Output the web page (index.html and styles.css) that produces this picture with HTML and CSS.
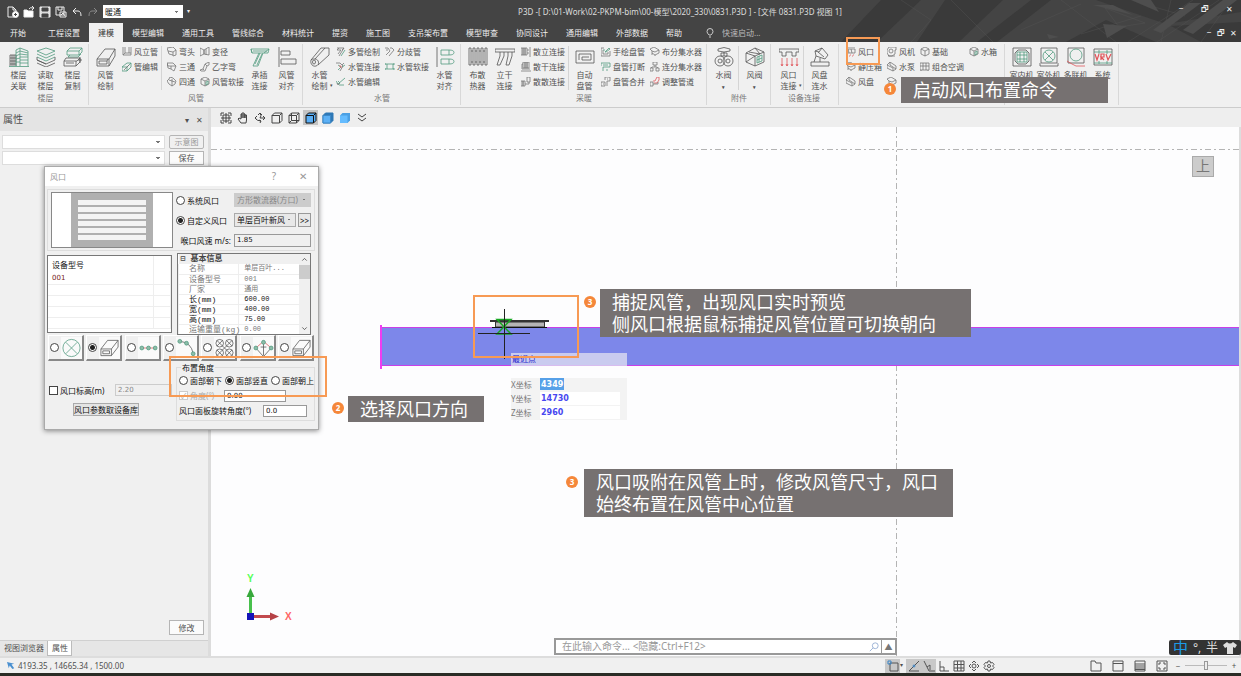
FILE: index.html
```html
<!DOCTYPE html>
<html lang="zh-CN">
<head>
  <meta charset="UTF-8" />
  <meta name="viewport" content="width=device-width, initial-scale=1.0" />
  <title>P3D</title>
  <link rel="stylesheet" href="styles.css">
</head>
<body>
<!-- icon sprite -->
<svg class="sprite" aria-hidden="true">
  <!-- large ribbon icons -->
  <symbol id="b-floors" viewBox="0 0 20 20"><path d="M1 19V8h6v11M3 8v11M5 8v11M1 11h6M1 14h6M1 17h6"/><path class="g" d="M7 19V3l4-2v18M11 1l8 3v15M11 4l8 2M11 7l8 1M11 10h8M11 13h8M11 16h8M7 6l4-2M7 9l4-2M7 12l4-1M7 15h4M0 19.500h20"/></symbol>
  <symbol id="b-read" viewBox="0 0 20 20"><path class="g" d="M1 4l9-3 9 3-9 4zM1 7l9 4 9-4M1 10l9 4 9-4"/><path d="M1 13l9 4 9-4M1 16l9 4 9-4M1 10v3l9 4M19 10v3"/></symbol>
  <symbol id="b-copy" viewBox="0 0 20 20"><path class="g" d="M4 4l3-3h12l-3 3zM4 4v4h12V4M19 1v4l-3 3M7 8l-2 2h10l3-3"/><path d="M1 14l2-3h14l-3 3zM1 14v5h12v-5M17 11v4l-4 4M15 13h4M17 10v6M3 16h8"/></symbol>
  <symbol id="b-duct" viewBox="0 0 20 20"><path d="M1 12h12v7H1zM1 12L9 2h10l-6 10M19 2v7l-6 10M3 14h8v3H3zM11 14l1-2"/></symbol>
  <symbol id="b-socket" viewBox="0 0 20 20"><path class="g" d="M1 2h18l-1 4h-5L8 19H3L9 6H2zM1 2l1 4M19 2l-5 4M9 6h4M5 17l5-11M7 18l5-11M3 4h14"/></symbol>
  <symbol id="b-align" viewBox="0 0 20 20"><path d="M2 0v20M4 4h9v4H4zM4 12h15v5H4z"/></symbol>
  <symbol id="b-pipe" viewBox="0 0 20 20"><path d="M1 13L11 1h8v7L8 18M1 13c-1 4 2 7 5 6 4-1 3-7-1-7-2 0-3 0-4 1zM5 12L15 1"/><ellipse cx="4" cy="15" rx="1.500" ry="2"/></symbol>
  <symbol id="b-palign" viewBox="0 0 20 20"><path d="M2 0v20"/><path class="g" d="M6 3h8v5H6zM6 12h8v5H6zM14 3q5 0 5 2.500T14 8M14 12q5 0 5 2.500T14 17"/></symbol>
  <symbol id="b-radiator" viewBox="0 0 20 20"><path d="M1 1h2v17H1zM5 1h2v17H5zM9 1h2v17H9zM13 1h2v17h-2zM17 1h2v17h-2zM3 4h2M7 4h2M11 4h2M15 4h2M3 15h2M7 15h2M11 15h2M15 15h2"/></symbol>
  <symbol id="b-riser" viewBox="0 0 20 20"><path d="M0 2h20v3H0zM5 5v4L2 18h3l4-9V5M13 5v4l-2 9h3l3-9V5"/></symbol>
  <symbol id="b-coil" viewBox="0 0 20 20"><path d="M1 4h18v12H1zM4 13V7h12v6H7v-3h7"/></symbol>
  <symbol id="b-wvalve" viewBox="0 0 20 20"><path d="M4 2q6-3 12 0v2q-6 2-12 0zM10 5v4M7 6h6v3H7z"/><circle cx="6" cy="14" r="5"/><circle cx="14" cy="14" r="5"/><circle cx="6" cy="14" r="2"/><circle cx="14" cy="14" r="2"/></symbol>
  <symbol id="b-avalve" viewBox="0 0 20 20"><path d="M1 6l9-5 9 4-9 4zM1 6v9l9 4V9M10 19l9-4V5M1 15l9-6M4 5l11 2M10 1l5 6"/><path class="g" d="M12 10l5-2v6l-5 2zM12 13l5-2M14 9v6"/></symbol>
  <symbol id="b-vent" viewBox="0 0 20 20"><path d="M0 2h20v3h-3v4h-4V5H7v4H3V5H0z"/><path class="r" d="M3 11v8M8 11v8M13 11v8M18 11v8M2 17l1 2 1-2M7 17l1 2 1-2M12 17l1 2 1-2M17 17l1 2 1-2"/></symbol>
  <symbol id="b-fcu" viewBox="0 0 20 20"><path d="M1 15h18v4H1zM4 15l2-6M6 9l-1-5 7-3 6 7-3 4-9-3zM8 5l6 5M5 4l4 1M12 1l-3 4M10 11v4"/></symbol>
  <symbol id="b-indoor" viewBox="0 0 20 20"><path d="M1 1h18v18H1zM6 3h8l3 3v8l-3 3H6l-3-3V6z"/><path class="g" d="M5 5h10v10H5zM8 5v10M12 5v10M5 8h10M5 12h10"/></symbol>
  <symbol id="b-outdoor" viewBox="0 0 20 20"><path d="M2 1h16v15H2zM1 16v3h18v-3"/><circle class="g" cx="10" cy="9" r="6"/><path class="g" d="M6 5l8 8M14 5l-8 8"/></symbol>
  <symbol id="b-multi" viewBox="0 0 20 20"><path d="M2 1h16v15H2z"/><circle class="g" cx="10" cy="8" r="6"/><path class="r" d="M1 14l5 3 4 2h9"/></symbol>
  <symbol id="b-vrv" viewBox="0 0 20 20"><path d="M1 2h18v16H1z"/><path class="g" d="M1 5h18M1 16h18M6 3v4M14 3v4M6 14v3M14 14v3"/><path class="r" d="M2 7l2 6 2-6M8 13V7h3v3H8l3 3M13 7l2 6 3-6" stroke-width="1.200"/></symbol>
  <!-- small ribbon icons -->
  <symbol id="s-up" viewBox="0 0 10 10"><path d="M1 0v8h8V0M3 0v6M7 0v6M1 8l2-2h6"/></symbol>
  <symbol id="s-edit" viewBox="0 0 10 10"><path class="g" d="M0 5l5-4h4v4L5 9H0zM0 5h5v4M5 5l4-4"/><path d="M2 8l5-5"/></symbol>
  <symbol id="s-elbow" viewBox="0 0 10 10"><path d="M0 1l6-1 3 3v5L6 9V5L1 4zM1 4l1 3 4 1M6 5l3-2"/></symbol>
  <symbol id="s-tee" viewBox="0 0 10 10"><path d="M0 1h6l3 3-2 5-3-2V4L1 4zM4 4l5 0M0 1l1 5 3 1"/></symbol>
  <symbol id="s-cross" viewBox="0 0 10 10"><path d="M3 0l3 1 3 3-1 3-3 2-3-2-2-3 2-2zM2 3l6 2M5 2v7"/></symbol>
  <symbol id="s-cube" viewBox="0 0 10 10"><path d="M5 0l4 2v5L5 9 1 7V2zM1 2l4 2 4-2M5 4v5"/></symbol>
  <symbol id="s-cubeg" viewBox="0 0 10 10"><path d="M5 0l4 2v5L5 9 1 7V2zM1 2l4 2 4-2M5 4v5"/><path class="g" d="M6 5l2-1v3L6 8z"/></symbol>
  <symbol id="s-reduce" viewBox="0 0 10 10"><path d="M0 1l4 2v4L0 9zM4 3l5-3v8L4 7M4 3v4M6 2v6"/></symbol>
  <symbol id="s-bend" viewBox="0 0 10 10"><path d="M0 8l3-1 2-5 4-2v3L7 4 5 9H1zM3 7l1 1M5 2l2 2"/></symbol>
  <symbol id="s-multi" viewBox="0 0 10 10"><path d="M1 1h7L3 9M1 3h4L2 7M3 1L1 3M6 3l2-2"/><path class="g" d="M5 9l4-6"/></symbol>
  <symbol id="s-conn" viewBox="0 0 10 10"><path d="M0 1h4l3 3-3 5M8 1L6 3"/><path class="g" d="M2 3l3 2-3 3M9 3L6 5"/><path class="r" d="M3 4h2v2"/></symbol>
  <symbol id="s-pedit" viewBox="0 0 10 10"><path class="g" d="M0 4l2 3 7-6M3 8h5M2 4l2 2"/><path d="M1 6l1 2 2-2"/></symbol>
  <symbol id="s-fork" viewBox="0 0 10 10"><path d="M0 1h3l2 3-4 4M5 1h2l2 2-5 6M1 3h2"/></symbol>
  <symbol id="s-soft" viewBox="0 0 10 10"><path class="g" d="M2 2h6v5H2zM0 1v2M0 6v2M9 1v2M9 6v2M0 2h2M0 7h2M8 2h1M8 7h1"/></symbol>
  <symbol id="s-bars" viewBox="0 0 10 10"><path d="M0 1h2v7H0zM2 1h2v7H2zM4 1h2v7H4zM6 3h2M6 6h2M9 0v10"/></symbol>
  <symbol id="s-bars2" viewBox="0 0 10 10"><path d="M2 0h2v6H2zM4 0h2v6H4zM6 0h2v6H6zM0 9h10M1 7h8M2 2H1v5"/></symbol>
  <symbol id="s-bars3" viewBox="0 0 10 10"><path d="M0 4h2v5H0zM2 4h2v5H2zM6 0h3v5H6zM4 7h4V5"/></symbol>
  <symbol id="s-hand" viewBox="0 0 10 10"><path d="M0 1h3M0 1v8h9V4M2 3v4h5V5"/><path class="g" d="M4 5l4-4 1 1-4 3zM4 3H2"/></symbol>
  <symbol id="s-break" viewBox="0 0 10 10"><path class="g" d="M0 1h9v4H2v4M2 3h5M0 1v3M6 7v2"/></symbol>
  <symbol id="s-merge" viewBox="0 0 10 10"><path d="M4 0h5v4H6v5M0 5h4v4H0zM6 2h1M2 7h1M4 0v3"/></symbol>
  <symbol id="s-dist" viewBox="0 0 10 10"><path d="M0 2l4-2 5 3v3L5 8 2 6V4zM2 4l3 1 4-2M5 8v1M2 6v2"/></symbol>
  <symbol id="s-dist2" viewBox="0 0 10 10"><path d="M3 0h4v3H3zM0 6h3v3H0zM6 6h3v3H6zM5 3v2M1 6l1-1h5l1 1"/></symbol>
  <symbol id="s-adjust" viewBox="0 0 10 10"><path class="r" d="M3 4h2l2-4h2v3L7 6H4"/><path d="M0 5h3v4H0zM3 7h5V5"/></symbol>
  <symbol id="s-outlet" viewBox="0 0 10 10"><path d="M0 0h9M0 2h9v4H0zM2 2l1 4M5 2l1 4"/><path class="r" d="M1 8h1M4 8h1M7 8h1M0 9h1M3 9h1M6 9h1"/></symbol>
  <symbol id="s-fan" viewBox="0 0 10 10"><path d="M2 0h7v3H8v4L5 9H2L0 6V3zM2 8l-1 1h7"/><circle cx="4" cy="4" r="2"/></symbol>
  <symbol id="s-pump" viewBox="0 0 10 10"><path d="M0 3l3-3 6 4v3L6 9 0 6zM3 0v3l6 4M0 3l6 3v3"/></symbol>
  <symbol id="s-ahu" viewBox="0 0 10 10"><path d="M0 1h9v7H0zM3 1v7M6 1v7M0 4h9M1 8v1M8 8v1"/></symbol>
  <!-- cubes of the view bar -->
  <symbol id="v-cube" viewBox="0 0 12 12"><path d="M1 3.500h7.500V11H1zM1 3.500L3.500 1H11L8.500 3.500M11 1v7.500L8.500 11"/></symbol>
</svg>

<div class="app">
  <header class="top">
    <svg class="top-art" viewBox="0 0 400 42" preserveAspectRatio="xMaxYMid slice" aria-hidden="true">
      <path class="art-dark" d="M40 0L0 42h36L80 0zM104 0L76 42h42l44-42zM190 0l-54 42h20L210 0zM255 0l70 24 75-12V0zM225 42l40-22 50 22zM330 26l30 16h40V22z"/>
      <path class="art-line" d="M110 0l42 42M60 0l30 20-20 22M220 0l55 42M352 0l-65 42M378 0l-62 42M264 8l40 15-26 4zM300 3l44 13M330 0l-10 42M390 0l-30 42M240 34l60-18M180 30l60-26"/>
      <path class="art-fill" d="M252 5l20 0 20 10zM290 0l20 0 8 12zM348 3l12 0-40 30-8-3zM382 0l14 0-44 34-10-4zM262 24l24 2-20 12zM206 34l12 3-10 2z"/>
    </svg>
    <div class="titlebar">
      <div class="quick">
        <button aria-label="新建"><svg viewBox="0 0 12 12"><path d="M7 11H1V1h5l3 3v2M6 1v3h3"/><circle cx="8.500" cy="8.500" r="3" fill="#fff"/><path d="M8.500 7v3M7 8.500h3" stroke="#444"/></svg></button>
        <button aria-label="打开"><svg viewBox="0 0 12 12"><path d="M1 11V4h3l1 1h5v6z" fill="#fff"/><path d="M6 3q1-2 4-1M9 0l2 2-2 2"/></svg></button>
        <button aria-label="保存文件"><svg viewBox="0 0 12 12"><path d="M1 1h10v10H1z" fill="#ddd"/><path d="M3 2h6v3H3zM3 8h6v3H3z" fill="#444" stroke="#444"/></svg></button>
        <button aria-label="另存为"><svg viewBox="0 0 12 12"><path d="M1 1h8v8H1zM3 1v3h4V1M5 6h6v5H5z"/><path d="M6 9l2-2 2 3" /></svg></button>
        <button aria-label="撤销"><svg viewBox="0 0 12 12"><path d="M5 2L2 5l3 3M2 5h5q3 0 3 5"/></svg></button>
        <button class="dim" aria-label="重做"><svg viewBox="0 0 12 12"><path d="M7 2l3 3-3 3M10 5H5q-3 0-3 5"/></svg></button>
        <select aria-label="专业"><option>暖通</option></select>
        <span class="caret">▾</span>
      </div>
      <div class="doc-title">P3D -[ D:\01-Work\02-PKPM-bim\00-模型\2020_330\0831.P3D ] - [文件 0831.P3D 视图 1]</div>
      <div class="win"><button aria-label="最小化">‒</button><button aria-label="还原">🗗</button><button aria-label="关闭">✕</button></div>
    </div>
    <nav class="tabs">
      <a href="#">开始</a><a href="#">工程设置</a><a href="#" class="active">建模</a><a href="#">模型编辑</a><a href="#">通用工具</a><a href="#">管线综合</a><a href="#">材料统计</a><a href="#">提资</a><a href="#">施工图</a><a href="#">支吊架布置</a><a href="#">模型审查</a><a href="#">协同设计</a><a href="#">通用编辑</a><a href="#">外部数据</a><a href="#">帮助</a>
      <label class="launch"><svg viewBox="0 0 8 10"><path d="M3 7Q1 5 1 3.500a3 3 0 0 1 6 0Q7 5 5 7zM3 9h2"/></svg><input type="text" aria-label="快速启动" placeholder="快速启动..."></label>
      <div class="win small"><button aria-label="最小化视图">‒</button><button aria-label="还原视图">🗗</button><button aria-label="关闭视图">✕</button></div>
    </nav>
  </header>

  <section class="ribbon">
    <div class="group">
      <div class="items">
        <button class="big"><svg><use href="#b-floors"/></svg>楼层<br>关联</button>
        <button class="big"><svg><use href="#b-read"/></svg>读取<br>楼层</button>
        <button class="big"><svg><use href="#b-copy"/></svg>楼层<br>复制</button>
      </div>
      <div class="name">楼层</div>
    </div>
    <div class="group">
      <div class="items">
        <button class="big"><svg><use href="#b-duct"/></svg>风管<br>绘制</button>
        <div class="stack"><button><svg><use href="#s-up"/></svg>风立管</button><button><svg><use href="#s-edit"/></svg>管编辑</button></div>
        <i class="rule"></i>
        <div class="stack"><button><svg><use href="#s-elbow"/></svg>弯头</button><button><svg><use href="#s-tee"/></svg>三通</button><button><svg><use href="#s-cross"/></svg>四通</button></div>
        <div class="stack"><button><svg><use href="#s-reduce"/></svg>变径</button><button><svg><use href="#s-bend"/></svg>乙字弯</button><button><svg><use href="#s-cubeg"/></svg>风管软接</button></div>
        <button class="big"><svg><use href="#b-socket"/></svg>承插<br>连接</button>
        <button class="big"><svg><use href="#b-align"/></svg>风管<br>对齐</button>
      </div>
      <div class="name">风管</div>
    </div>
    <div class="group">
      <div class="items">
        <button class="big"><svg><use href="#b-pipe"/></svg>水管<br>绘制<em>▾</em></button>
        <div class="stack"><button><svg><use href="#s-multi"/></svg>多管绘制</button><button><svg><use href="#s-conn"/></svg>水管连接</button><button><svg><use href="#s-pedit"/></svg>水管编辑</button></div>
        <div class="stack"><button><svg><use href="#s-fork"/></svg>分歧管</button><button><svg><use href="#s-soft"/></svg>水管软接</button></div>
        <button class="big"><svg><use href="#b-palign"/></svg>水管<br>对齐</button>
      </div>
      <div class="name">水管</div>
    </div>
    <div class="group">
      <div class="items">
        <button class="big"><svg><use href="#b-radiator"/></svg>布散<br>热器</button>
        <button class="big"><svg><use href="#b-riser"/></svg>立干<br>连接</button>
        <div class="stack"><button><svg><use href="#s-bars"/></svg>散立连接</button><button><svg><use href="#s-bars2"/></svg>散干连接</button><button><svg><use href="#s-bars3"/></svg>散散连接</button></div>
        <i class="rule"></i>
        <button class="big"><svg><use href="#b-coil"/></svg>自动<br>盘管</button>
        <div class="stack"><button><svg><use href="#s-hand"/></svg>手绘盘管</button><button><svg><use href="#s-break"/></svg>盘管打断</button><button><svg><use href="#s-merge"/></svg>盘管合并</button></div>
        <div class="stack"><button><svg><use href="#s-dist"/></svg>布分集水器</button><button><svg><use href="#s-dist2"/></svg>连分集水器</button><button><svg><use href="#s-adjust"/></svg>调整管道</button></div>
      </div>
      <div class="name">采暖</div>
    </div>
    <div class="group">
      <div class="items">
        <button class="big"><svg><use href="#b-wvalve"/></svg>水阀<br><b>▾</b></button>
        <i class="rule"></i>
        <button class="big"><svg><use href="#b-avalve"/></svg>风阀<br><b>▾</b></button>
      </div>
      <div class="name">附件</div>
    </div>
    <div class="group roomy">
      <div class="items">
        <button class="big"><svg><use href="#b-vent"/></svg>风口<br>连接<em>▾</em></button>
        <i class="rule"></i>
        <button class="big"><svg><use href="#b-fcu"/></svg>风盘<br>连水</button>
      </div>
      <div class="name">设备连接</div>
    </div>
    <div class="group roomy">
      <div class="items">
        <div class="stack"><button><svg><use href="#s-outlet"/></svg>风口</button><button><svg><use href="#s-dist"/></svg>静压箱</button><button><svg><use href="#s-pump"/></svg>风盘</button></div>
        <div class="stack"><button><svg><use href="#s-fan"/></svg>风机</button><button><svg><use href="#s-pump"/></svg>水泵</button><button aria-label="设备"><svg><use href="#s-dist"/></svg></button></div>
        <div class="stack"><button><svg><use href="#s-cube"/></svg>基础</button><button><svg><use href="#s-ahu"/></svg>组合空调</button></div>
        <div class="stack"><button><svg><use href="#s-cubeg"/></svg>水箱</button></div>
      </div>
    </div>
    <div class="group">
      <div class="items">
        <button class="big"><svg><use href="#b-indoor"/></svg>室内机</button>
        <button class="big"><svg><use href="#b-outdoor"/></svg>室外机</button>
        <button class="big"><svg><use href="#b-multi"/></svg>多联机</button>
        <button class="big"><svg><use href="#b-vrv"/></svg>系统</button>
      </div>
    </div>
  </section>

  <main class="work">
    <aside class="panel">
      <div class="panel-head"><h2>属性</h2><button aria-label="面板菜单">▾</button><button aria-label="关闭面板">✕</button></div>
      <div class="panel-body">
        <div class="prop-row"><select aria-label="图元"><option></option></select><button class="sketch" disabled>示意图</button></div>
        <div class="prop-row"><select aria-label="方案"><option></option></select><button>保存</button></div>
        <button class="modify">修改</button>
      </div>
      <div class="panel-tabs"><a href="#">视图浏览器</a><a href="#" class="active">属性</a></div>
    </aside>

    <section class="view">
      <div class="viewbar">
        <button aria-label="全图"><svg viewBox="0 0 12 12"><path d="M1 4V1h3M8 1h3v3M11 8v3H8M4 11H1V8M1 6h10M6 1v10M3 3h6v6H3z"/></svg></button>
        <button aria-label="平移"><svg viewBox="0 0 12 12"><path d="M4 11L1 7l1-1 2 1V2h1v4-5h2v5-4h1v4-3h1.500v5L9 11z"/></svg></button>
        <button aria-label="旋转"><svg viewBox="0 0 12 12"><path d="M4 3l2-2 2 2M6 1q2 3 0 5M9 4l2 2-2 2M11 6H6M3 4L1 6l2 2M1 6q2 3 6 3M5 8l2 1-1 2"/></svg></button>
        <button aria-label="线框"><svg><use href="#v-cube"/></svg></button>
        <button aria-label="隐藏线"><svg viewBox="0 0 12 12"><path d="M1 3.500h7.500V11H1zM1 3.500L3.500 1H11L8.500 3.500M11 1v7.500L8.500 11M3.500 1v7.500H11M3.500 8.500L1 11"/></svg></button>
        <button class="on" aria-label="着色"><svg viewBox="0 0 12 12"><path d="M1 3.500L3.500 1H11v7.500L8.500 11H1z" fill="#5aaef5" stroke="#111"/><path d="M1 3.500h7.500V11M8.500 3.500L11 1" stroke="#111"/></svg></button>
        <button aria-label="真实"><svg viewBox="0 0 12 12"><path d="M1 3.500L3.500 1H11v7.500L8.500 11H1z" fill="#2f78b6" stroke="#2f78b6"/><path d="M1 3.500h7.500V11H1z" fill="#5cb0f5" stroke="#3b88c8"/></svg></button>
        <button aria-label="光影"><svg viewBox="0 0 12 12"><path d="M1 3.500L3.500 1H11v7.500L8.500 11H1z" fill="#4ba0e4" stroke="none"/><path d="M1 3.500h7.500V11H1z" fill="#65bcff" stroke="none"/></svg></button>
        <button aria-label="更多"><svg viewBox="0 0 12 12"><path d="M2 2l4 3 4-3M2 6l4 3 4-3"/></svg></button>
      </div>
      <div class="canvas">
        <svg class="drawing" aria-hidden="true">
          <path class="axis" d="M0 22.500H2400M685.500 0V1400"/>
          <rect x="170" y="200" width="100%" height="39" fill="#7d87ea"/>
          <path d="M170 200.500H2400M170 238.500H2400" stroke="#c93fe8"/>
          <path d="M170 198v44" stroke="#f03cf0" stroke-width="2"/>
          <rect x="284.500" y="195" width="49" height="5" fill="#b5b5b5" stroke="#333"/>
          <path d="M279 194h59" stroke="#333" stroke-width="2"/>
          <path d="M281 200.500h55" stroke="#111"/>
          <path d="M286 192.500h14l-14 14.500h14z" fill="none" stroke="#17a821" stroke-width="1.500"/>
          <path d="M293.500 182v50M267 206.500h52" stroke="#222"/>
          <!-- axis gizmo -->
          <path d="M39.500 489v-20" stroke="#48c04c" stroke-width="3"/>
          <path d="M39.500 461l4 9h-8z" fill="#38a83c"/>
          <path d="M40 489.500h22" stroke="#c24a4e" stroke-width="3"/>
          <path d="M68 489.500l-9-4v8z" fill="#b54146"/>
          <rect x="36" y="486" width="7" height="7" fill="#1414b8"/>
          <text x="36" y="455" class="ax-y">Y</text>
          <text x="74" y="493" class="ax-x">X</text>
        </svg>
        <div class="cube-face">上</div>
        <div class="snap">最近点</div>
        <div class="coords">
          <label for="cx">X坐标</label><input id="cx" class="sel" type="text" value="4349">
          <label for="cy">Y坐标</label><input id="cy" type="text" value="14730">
          <label for="cz">Z坐标</label><input id="cz" type="text" value="2960">
        </div>
        <div class="command">
          <input type="text" aria-label="命令" placeholder="在此输入命令... &lt;隐藏:Ctrl+F12&gt;">
          <svg viewBox="0 0 12 12"><circle cx="7.500" cy="4.500" r="3.500"/><path d="M5 7l-4 4"/></svg>
          <button aria-label="展开">▲</button>
        </div>
        <div class="ime"><b>中</b><span>°,</span><span>半</span><svg viewBox="0 0 14 12"><path d="M4 0q3 3 6 0l4 3-2 3-2-1v7H4V5L2 6 0 3z"/></svg></div>
      </div>
    </section>
  </main>

  <footer class="status">
    <svg class="pick" viewBox="0 0 10 10"><path d="M0 1l8 2-3 1 3 4-2 1-3-4-1 3z" fill="#4a90d0" stroke="none"/></svg>
    <span class="pos">4193.35 , 14665.34 , 1500.00</span>
    <div class="snaps">
      <button class="on" aria-label="捕捉"><svg viewBox="0 0 12 12"><path d="M3 3h8v8H3z"/><path d="M1 1h3v3H1z" stroke="#3a86c8"/></svg></button>
      <span class="caret">▾</span>
      <button class="on" aria-label="极轴"><svg viewBox="0 0 12 12"><path d="M1 11L11 1M1 11h10"/><circle cx="6" cy="6" r="1" stroke="#3a86c8"/></svg></button>
      <button class="on" aria-label="追踪"><svg viewBox="0 0 12 12"><path d="M1 1l5 10h6M4 7l3-2v5"/></svg></button>
      <button aria-label="正交"><svg viewBox="0 0 12 12"><path d="M2 1v10h9M2 7h4v4"/></svg></button>
      <button aria-label="栅格"><svg viewBox="0 0 12 12"><path d="M1 1h10v10H1zM4.500 1v10M8 1v10M1 4.500h10M1 8h10"/></svg></button>
      <button aria-label="显示"><svg viewBox="0 0 12 12"><path d="M1 6l2-2M1 6l2 2M11 6L9 4M11 6L9 8M4 3l2-2 2 2M4 9l2 2 2-2"/><circle cx="6" cy="6" r="2"/></svg></button>
      <button aria-label="设置"><svg viewBox="0 0 12 12"><path d="M5 1h2l.5 2 2-.5 1.500 2L9.500 6l1.500 1.500-1.500 2-2-.5L7 11H5l-.5-2-2 .5-1.500-2L2.500 6 1 4.500l1.500-2 2 .5z"/><circle cx="6" cy="6" r="1.500"/></svg></button>
    </div>
    <div class="layouts">
      <button aria-label="文件夹"><svg viewBox="0 0 12 12"><path d="M1 11V1h4l1 2h5v8z"/></svg></button>
      <button aria-label="窗口"><svg viewBox="0 0 12 12"><path d="M1 1h10v10H1zM1 3.500h10"/></svg></button>
      <button aria-label="列表"><svg viewBox="0 0 12 12"><path d="M1 1h10v10H1zM1 4h10M1 6h10M1 8h10M1 9.500h10"/></svg></button>
      <button aria-label="全屏"><svg viewBox="0 0 12 12"><path d="M1 1h10v10H1zM3 5V3h2M7 3h2v2M9 7v2H7M5 9H3V7"/></svg></button>
    </div>
    <div class="zoom"><button aria-label="缩小">−</button><input type="range" aria-label="缩放" value="50"><button aria-label="放大">+</button></div>
  </footer>
  <div class="edge"></div>

  <!-- air outlet dialog -->
  <div class="dialog" role="dialog" aria-label="风口">
    <div class="dlg-title"><span>风口</span><button aria-label="帮助">?</button><button aria-label="关闭对话框">✕</button></div>
    <div class="dlg-body">
      <div class="dlg-top">
        <div class="preview"><div class="grille"><i></i><i></i><i></i><i></i><i></i><i></i></div></div>
        <div class="choice">
          <label><input type="radio" name="kind">系统风口</label>
          <select aria-label="系统风口类型" disabled><option>方形散流器(方口)</option></select>
          <label><input type="radio" name="kind" checked>自定义风口</label>
          <div class="pair"><select aria-label="自定义风口类型"><option>单层百叶新风</option></select><button>&gt;&gt;</button></div>
          <label class="right" for="speed">喉口风速 m/s:</label>
          <input id="speed" type="text" value="1.85" readonly>
        </div>
      </div>
      <div class="dlg-mid">
        <div class="models">
          <table><tr><th>设备型号</th><th></th></tr><tr><td class="hot">001</td><td></td></tr><tr><td></td><td></td></tr><tr><td></td><td></td></tr><tr><td></td><td></td></tr><tr><td></td><td></td></tr></table>
        </div>
        <div class="props">
          <table>
            <tr class="cat"><th colspan="2"><span>⊟</span>基本信息</th></tr>
            <tr><td>名称</td><td>单层百叶...</td></tr>
            <tr><td>设备型号</td><td>001</td></tr>
            <tr><td>厂家</td><td>通用</td></tr>
            <tr class="ed"><td>长(mm)</td><td>600.00</td></tr>
            <tr class="ed"><td>宽(mm)</td><td>400.00</td></tr>
            <tr class="ed"><td>高(mm)</td><td>75.00</td></tr>
            <tr><td>运输重量(kg)</td><td>0.00</td></tr>
          </table>
          <div class="scroll"><svg viewBox="0 0 10 10"><path d="M3 6l2-2 2 2"/></svg><i></i><svg viewBox="0 0 10 10"><path d="M3 4l2 2 2-2"/></svg></div>
        </div>
      </div>
      <div class="modes">
        <label><input type="radio" name="mode" aria-label="单个布置"><svg viewBox="0 0 22 22"><circle class="g" cx="11" cy="11" r="9"/><path class="g" d="M5 5l12 12M17 5L5 17"/></svg></label>
        <label><input type="radio" name="mode" aria-label="侧风口" checked><svg viewBox="0 0 22 22"><path d="M2 12h11v7H2zM2 12l7-9h11l-7 9M20 3v7l-7 9M4 14h7v3H4z"/></svg></label>
        <label><input type="radio" name="mode" aria-label="直线布置"><svg viewBox="0 0 22 22"><path class="r" d="M4 11h14"/><circle class="gf" cx="4" cy="11" r="2"/><circle class="gf" cx="11" cy="11" r="2"/><circle class="gf" cx="18" cy="11" r="2"/></svg></label>
        <label><input type="radio" name="mode" aria-label="弧线布置"><svg viewBox="0 0 22 22"><path d="M4 4q12 1 14 13"/><circle class="gf" cx="4" cy="4" r="2"/><circle class="gf" cx="11" cy="6" r="2"/><circle class="gf" cx="18" cy="17" r="2"/></svg></label>
        <label><input type="radio" name="mode" aria-label="矩形布置"><svg viewBox="0 0 22 22"><circle cx="6" cy="6" r="4"/><circle cx="16" cy="6" r="4"/><circle cx="6" cy="16" r="4"/><circle cx="16" cy="16" r="4"/><path d="M3 3l16 16M19 3L3 19M13 3l6 6M3 13l6 6M9 3L3 9M19 13l-6 6"/></svg></label>
        <label><input type="radio" name="mode" aria-label="菱形布置"><svg viewBox="0 0 22 22"><path class="r" d="M11 4l-8 7M11 4l8 7"/><path d="M3 11l8 9 8-9M11 6v13M8 10h6"/><circle class="gf" cx="11" cy="5" r="2"/><circle class="gf" cx="3" cy="11" r="2"/><circle class="gf" cx="19" cy="11" r="2"/></svg></label>
        <label><input type="radio" name="mode" aria-label="风管布置"><svg viewBox="0 0 22 22"><path d="M2 12h11v7H2zM2 12l7-9h11l-7 9M20 3v7l-7 9M4 14h7v3H4z"/></svg></label>
      </div>
      <div class="dlg-foot">
        <div class="left">
          <div class="elev"><label><input type="checkbox">风口标高(m)</label><input type="text" aria-label="标高" value="2.20" disabled></div>
          <button>风口参数取设备库</button>
        </div>
        <fieldset>
          <legend>布置角度</legend>
          <div class="line"><label><input type="radio" name="dir">面部朝下</label><label><input type="radio" name="dir" checked>面部竖直</label><label><input type="radio" name="dir">面部朝上</label></div>
          <div class="line"><label class="off"><input type="checkbox" checked disabled>角度(°)</label><input type="text" aria-label="角度" value="0.00"></div>
          <div class="line"><label class="wide" for="rot">风口面板旋转角度(°)</label><input id="rot" type="text" value="0.0"></div>
        </fieldset>
      </div>
    </div>
  </div>

  <!-- tutorial marks -->
  <div class="mark m-cmd"></div>
  <div class="mark m-dir"></div>
  <div class="mark m-duct"></div>
  <span class="num n1">1</span><p class="note t1">启动风口布置命令</p>
  <span class="num n2">2</span><p class="note t2">选择风口方向</p>
  <span class="num n3">3</span><p class="note t3">捕捉风管，出现风口实时预览<br>侧风口根据鼠标捕捉风管位置可切换朝向</p>
  <span class="num n4">3</span><p class="note t4">风口吸附在风管上时，修改风管尺寸，风口<br>始终布置在风管中心位置</p>
</div>
</body>
</html>
```
FILE: styles.css
```css
* {
  box-sizing: border-box;
}
body {
  margin: 0;
  font-family: "Noto Sans", "Noto Sans CJK SC", sans-serif;
  font-size: 8px;
  line-height: 11px;
  color: #505050;
}
button, input, select {
  font: inherit;
  color: inherit;
  margin: 0;
  padding: 0;
  border: 0;
  background: none;
}
a {
  color: inherit;
  text-decoration: none;
}
svg {
  fill: none;
  stroke: #555;
  stroke-width: 1;
}
.sprite {
  display: none;
}
.g {
  stroke: #529a7f;
}
.r {
  stroke: #e0555a;
}
.gf {
  fill: #8dbda9;
  stroke: #529a7f;
}
.caret {
  font-size: 6px;
}
.app {
  position: relative;
  display: flex;
  flex-direction: column;
  height: 100vh;
  overflow: hidden;
  background: #f0f0f0;
}

/* title bar and tabs */
.top {
  position: relative;
  background: #444;
  color: #eee;
}
.top-art {
  position: absolute;
  top: 0;
  right: 0;
  width: 400px;
  height: 100%;
  stroke: none;
}
.art-dark {
  fill: #3a3a3a;
}
.art-line {
  stroke: #555;
  opacity: 0.4;
}
.art-fill {
  fill: #4e4e4e;
}
.titlebar, .tabs {
  position: relative;
  display: flex;
  align-items: center;
}
.titlebar {
  height: 23px;
}
.quick {
  display: flex;
  flex: 13;
  align-items: center;
  gap: 4px;
  height: 17px;
  padding-left: 7px;
}
.quick button {
  width: 12px;
  height: 12px;
}
.quick svg {
  display: block;
  width: 12px;
  height: 12px;
  stroke: #eee;
}
.quick .dim {
  opacity: 0.4;
}
select {
  appearance: none;
  background: linear-gradient(45deg, transparent 50%, #777 50%) no-repeat right 6px center / 2px 2px, linear-gradient(-45deg, transparent 50%, #777 50%) no-repeat right 4px center / 2px 2px, #fff;
}
.quick select {
  width: 80px;
  height: 13px;
  padding-left: 2px;
  color: #111;
}
.doc-title {
  white-space: nowrap;
  color: #ddd;
}
.win {
  display: flex;
  flex: 10;
  justify-content: flex-end;
  gap: 12px;
  padding: 0 6px 6px 0;
}
.win button {
  width: 12px;
  color: #eee;
}
.win.small {
  gap: 0;
  padding: 0 2px 0 0;
}
.tabs {
  height: 19px;
  padding-left: 1px;
}
.tabs a {
  padding: 0 9px;
  line-height: 18px;
}
.tabs a:first-child {
  margin-right: 4px;
}
.tabs .active {
  background: #f0f0f0;
  color: #333;
  line-height: 19px;
}
.launch {
  display: flex;
  align-items: center;
  gap: 8px;
  margin-left: 15px;
}
.launch svg {
  width: 8px;
  height: 10px;
  stroke: #ccc;
}
.launch input {
  width: 60px;
}
.launch input::placeholder {
  color: #bbb;
}

/* ribbon */
.ribbon {
  display: flex;
  height: 66px;
  padding-top: 2px;
  border-bottom: 1px solid #ccc;
}
.ribbon svg {
  stroke-width: 0.8;
}
.group {
  display: flex;
  flex-direction: column;
  height: 61px;
  padding: 0 2px 0 3px;
  border-right: 1px solid #d8d8d8;
}
.group:first-child {
  padding: 0 2px 0 5px;
}
.group.roomy {
  padding: 0 5px 0 4px;
}
.items {
  display: flex;
  height: 48px;
}
.name {
  text-align: center;
  color: #777;
}
.big {
  position: relative;
  width: 27px;
  text-align: center;
  align-self: flex-start;
  white-space: nowrap;
}
.big svg {
  display: block;
  width: 20px;
  height: 20px;
  margin: 3px auto 2px;
}
.big em {
  position: absolute;
  right: 0;
  font-size: 5px;
  font-style: normal;
}
.big b {
  font-size: 5px;
}
.stack {
  display: flex;
  flex-direction: column;
  margin: 0 2px 0 3px;
}
.stack button {
  display: flex;
  align-items: center;
  gap: 2px;
  height: 15px;
  white-space: nowrap;
}
.stack svg {
  width: 10px;
  height: 10px;
  stroke: #777;
}
.rule {
  width: 1px;
  height: 44px;
  margin: 2px 2px 0 1px;
  background: #d4d4d4;
}

/* property panel */
.work {
  display: flex;
  flex: 1;
  min-height: 0;
}
.panel {
  display: flex;
  flex-direction: column;
  width: 211px;
  border-right: 3px solid #dcdcdc;
}
.panel-head {
  display: flex;
  align-items: center;
  height: 23px;
  padding: 0 3px;
  background: #e4e4e4;
}
.panel-head h2 {
  flex: 1;
  margin: 0;
  font-size: 10px;
  font-weight: normal;
}
.panel-head button {
  width: 12px;
}
.panel-body {
  display: flex;
  flex: 1;
  flex-direction: column;
  gap: 2px;
  padding: 4px 4px 5px 2px;
}
.prop-row {
  display: flex;
  gap: 4px;
}
.prop-row select {
  flex: 1;
  height: 14px;
  border: 1px solid #ddd;
}
.panel-body button {
  width: 35px;
  height: 14px;
  border: 1px solid #b5b5b5;
  background: #fbfbfb;
  line-height: 12px;
}
.panel-body .sketch {
  border-radius: 2px;
  background: #f0f0f0;
  color: #999;
}
.panel-body .modify {
  height: 15px;
  margin-top: auto;
  align-self: flex-end;
}
.panel-tabs {
  display: flex;
  height: 16px;
  background: #e6e6e6;
  border-top: 1px solid #d0d0d0;
}
.panel-tabs a {
  padding: 0 3px 0 4px;
  line-height: 14px;
}
.panel-tabs .active {
  background: #fff;
  border: 1px solid #bbb;
  border-top: 0;
}

/* drawing view */
.view {
  display: flex;
  flex: 1;
  flex-direction: column;
  min-width: 0;
}
.viewbar {
  display: flex;
  align-items: center;
  gap: 2px;
  height: 19px;
  padding-left: 7px;
  background: #eee;
}
.viewbar button {
  width: 15px;
  height: 15px;
}
.viewbar svg {
  display: block;
  width: 12px;
  height: 12px;
  margin: auto;
  stroke: #444;
}
.viewbar .on {
  background: #c4c4c4;
}
.canvas {
  position: relative;
  flex: 1;
  background: #fdfdfe;
  border-right: 2px solid #ddd;
}
.drawing {
  position: absolute;
  width: 100%;
  height: 100%;
  stroke: none;
}
.axis {
  stroke: #b4b4b4;
  stroke-dasharray: 6 3 2 3;
}
.ax-x, .ax-y {
  font: bold 10px "Liberation Sans", sans-serif;
  fill: #f66;
}
.ax-y {
  fill: #5f5;
}
.cube-face {
  position: absolute;
  top: 29px;
  right: 25px;
  width: 22px;
  height: 21px;
  border: 1px solid #aaa;
  background: #ccc;
  color: #777;
  font-size: 14px;
  line-height: 18px;
  text-align: center;
}
.snap {
  position: absolute;
  left: 300px;
  top: 226px;
  width: 116px;
  height: 13px;
  padding-left: 1px;
  background: rgba(220, 220, 240, 0.8);
  color: #2222cc;
}
.coords {
  position: absolute;
  left: 300px;
  top: 251px;
  display: grid;
  grid-template-columns: 26px 80px;
  column-gap: 3px;
  row-gap: 1px;
  width: 116px;
  padding-bottom: 1px;
  background: #f3f3f3;
  color: #777;
}
.coords label {
  line-height: 13px;
}
.coords input {
  width: 80px;
  height: 13px;
  padding-left: 1px;
  background: #fff;
  color: #4848f0;
  font-family: "DejaVu Sans", sans-serif;
  font-weight: bold;
}
.coords .sel {
  width: 24px;
  height: 12px;
  background: #56a0e8;
  color: #fff;
}
.command {
  position: absolute;
  left: 343px;
  bottom: 1px;
  display: flex;
  align-items: center;
  width: 343px;
  height: 17px;
  border: 2px solid #999;
  background: #fff;
}
.command input {
  flex: 1;
  padding-left: 6px;
  font-size: 10px;
}
.command input::placeholder {
  color: #999;
}
.command svg {
  width: 10px;
  height: 10px;
  margin-right: 2px;
  stroke: #8fa8d0;
}
.command button {
  width: 14px;
  height: 13px;
  border-left: 1px solid #999;
  color: #777;
}
.ime {
  position: absolute;
  right: -2px;
  bottom: 1px;
  display: flex;
  align-items: center;
  justify-content: space-between;
  width: 72px;
  height: 15px;
  padding: 0 4px;
  border-radius: 2px;
  background: #333;
  color: #ddd;
  font-size: 12px;
}
.ime b {
  color: #1b9be8;
  font-size: 15px;
  font-weight: normal;
}
.ime svg {
  width: 14px;
  height: 12px;
  fill: #ddd;
  stroke: none;
}

/* status bar */
.status {
  display: flex;
  align-items: center;
  height: 17px;
  padding: 0 2px 0 7px;
  border-top: 2px solid #ddd;
}
.pick {
  width: 9px;
  height: 9px;
  margin-right: 2px;
}
.pos {
  flex: 1;
}
.snaps, .layouts, .zoom {
  display: flex;
  align-items: center;
}
.status button {
  width: 15px;
  height: 14px;
}
.status button svg {
  display: block;
  width: 12px;
  height: 12px;
  margin: auto;
}
.status .on {
  background: #c8c8c8;
}
.snaps .caret {
  width: 6px;
}
.layouts {
  gap: 7px;
  margin: 0 4px 0 92px;
}
.zoom input {
  width: 42px;
  height: 10px;
  margin: 0 2px;
  appearance: none;
  background: linear-gradient(#bbb, #bbb) no-repeat center / 100% 1px;
}
.zoom input::-webkit-slider-thumb {
  appearance: none;
  width: 4px;
  height: 9px;
  border: 1px solid #999;
  background: #eee;
}
.status .zoom button {
  width: 10px;
}
.edge {
  height: 3px;
  background: #2a2c25;
}

/* dialog */
.dialog {
  position: absolute;
  left: 44px;
  top: 166px;
  width: 275px;
  border: 1px solid #aaa;
  background: #f0f0f0;
  box-shadow: 0 1px 5px rgba(0, 0, 0, 0.45);
  color: #111;
}
.dlg-title {
  display: flex;
  align-items: center;
  height: 19px;
  padding: 0 7px 0 5px;
  background: #fff;
  color: #999;
}
.dlg-title span {
  flex: 1;
}
.dlg-title button {
  width: 16px;
  margin-left: 13px;
  font-size: 10px;
}
.dlg-body {
  padding: 3px 3px 8px 2px;
}
.dlg-body svg {
  stroke-width: 0.8;
}
.dlg-body input[type="text"] {
  border: 1px solid #999;
  background: #fff;
  font-family: "DejaVu Sans", sans-serif;
  font-size: 7px;
  padding-left: 2px;
}
.dlg-body label {
  display: flex;
  align-items: center;
  white-space: nowrap;
}
.dlg-body input[type="radio"], .dlg-body input[type="checkbox"] {
  appearance: none;
  flex: none;
  width: 9px;
  height: 9px;
  margin-right: 2px;
  border: 1px solid #444;
  background: #fff;
}
.dlg-body input[type="radio"] {
  border-radius: 50%;
}
.dlg-body input[type="radio"]:checked {
  background: radial-gradient(#222 2px, #fff 3px);
}
.dlg-body input[type="checkbox"]:disabled {
  border-color: #ccc;
}
.dlg-body input[type="checkbox"]:checked::before {
  content: "✓";
  display: block;
  line-height: 7px;
  text-align: center;
}
.dlg-top {
  display: flex;
  gap: 3px;
  padding-left: 3px;
  border: 1px solid #ddd;
}
.preview {
  width: 122px;
  height: 56px;
  margin-top: 2px;
  padding: 0 19px;
  border: 1px solid #888;
  background: #fff;
}
.grille {
  display: flex;
  flex-direction: column;
  justify-content: space-between;
  height: 54px;
  padding: 7px;
  background: #b0b0b0;
}
.grille i {
  height: 5px;
  background: #f4f4f4;
}
.choice {
  display: grid;
  grid-template-columns: 55px 77px;
  grid-auto-rows: 20px;
  align-items: center;
  column-gap: 3px;
  font-size: 8px;
}
.choice select {
  width: 77px;
  height: 14px;
  padding: 0 9px 0 2px;
  border: 1px solid #aaa;
  background-color: #e8e8e8;
  line-height: 12px;
}
.choice select:disabled {
  border-color: #ccc;
  background-color: #ccc;
  color: #888;
  opacity: 1;
}
.pair {
  display: flex;
  gap: 2px;
}
.pair select {
  width: 62px;
}
.pair button {
  flex: 1;
  height: 14px;
  border: 1px solid #999;
  background: #e8e8e8;
}
.choice .right {
  justify-content: flex-end;
}
.choice input[type="text"] {
  height: 13px;
  width: 77px;
  background: #f0f0f0;
}
.dlg-mid {
  display: flex;
  gap: 5px;
  margin-top: 2px;
}
.models {
  width: 125px;
  height: 78px;
  margin-top: 2px;
  border: 1px solid #777;
  background: #fff;
}
table {
  width: 100%;
  border-collapse: collapse;
  table-layout: fixed;
}
th, td {
  padding: 0;
  text-align: left;
  font-weight: normal;
}
.models th, .models td {
  height: 11px;
  padding-left: 4px;
  border-bottom: 1px solid #eee;
  border-right: 1px solid #eee;
}
.models th {
  height: 17px;
  border-bottom: 0;
}
.models th:last-child {
  width: 17px;
}
.models .hot {
  color: #722;
  font-family: "DejaVu Sans", sans-serif;
  font-size: 7px;
}
.props {
  display: flex;
  width: 134px;
  height: 82px;
  border: 1px solid #777;
  background: #fff;
  overflow: hidden;
}
.props table {
  flex: 1;
  width: 122px;
  align-self: flex-start;
  font-family: "Liberation Mono", "Noto Sans CJK SC", monospace;
  line-height: 10px;
}
.props tr {
  height: 10px;
  color: #777;
}
.props td {
  padding-left: 5px;
  font-size: 7px;
  white-space: nowrap;
  border: 1px solid #eee;
  border-width: 0 0 1px 1px;
  line-height: 9px;
}
.props td:first-child {
  padding-left: 10px;
  font-size: 8px;
}
.props .cat {
  background: #f0f0f0;
}
.props .cat th {
  font-weight: bold;
  color: #444;
}
.props .cat span {
  display: inline-block;
  width: 12px;
  padding-left: 2px;
}
.props .ed {
  color: #111;
}
.scroll {
  display: flex;
  flex-direction: column;
  width: 11px;
  background: #f0f0f0;
}
.scroll svg {
  width: 11px;
  height: 11px;
}
.scroll i {
  height: 14px;
  margin-bottom: auto;
  background: #ccc;
}
.modes {
  display: flex;
  justify-content: space-between;
  padding: 0 1px;
}
.modes label {
  width: 36px;
  height: 26px;
  padding-left: 1px;
  border: 1px solid #fff;
  border-right: 2px solid #888;
  border-bottom: 2px solid #888;
}
.modes svg {
  width: 22px;
  height: 22px;
  background: #fafafa;
}
.dlg-foot {
  display: flex;
  gap: 4px;
  margin-top: 1px;
}
.left {
  width: 125px;
  padding-top: 22px;
}
.elev {
  display: flex;
  align-items: center;
  justify-content: space-between;
  padding-left: 2px;
}
.elev input[type="text"] {
  width: 57px;
  height: 12px;
  border-color: #ccc;
  background: #f0f0f0;
  color: #888;
}
.left button {
  display: block;
  width: 66px;
  height: 13px;
  margin: 7px 0 0 26px;
  border: 1px solid #aaa;
  background: #e4e4e4;
  line-height: 11px;
}
fieldset {
  flex: 1;
  min-width: 0;
  margin: 0;
  padding: 0 0 2px 2px;
  border: 1px solid #ddd;
}
legend {
  margin-left: 2px;
  padding: 0 1px;
}
.line {
  display: flex;
  align-items: center;
  gap: 3px;
  height: 15px;
}
.off {
  width: 42px;
  color: #aaa;
}
.wide {
  width: 81px;
}
.line input[type="text"] {
  width: 62px;
  height: 12px;
}
.line .wide + input[type="text"] {
  width: 44px;
}

/* tutorial marks */
.mark {
  position: absolute;
  border: 2px solid #f79a54;
}
.m-cmd {
  left: 846px;
  top: 37px;
  width: 34px;
  height: 28px;
}
.m-dir {
  left: 169px;
  top: 356px;
  width: 158px;
  height: 41px;
}
.m-duct {
  left: 473px;
  top: 295px;
  width: 106px;
  height: 63px;
}
.num {
  position: absolute;
  width: 12px;
  height: 12px;
  border-radius: 50%;
  background: #f5873a;
  color: #fff;
  font-weight: bold;
  line-height: 12px;
  text-align: center;
}
.note {
  position: absolute;
  margin: 0;
  padding: 2px 12px;
  background: #767171;
  color: #fff;
  font-size: 18px;
  line-height: 22px;
  white-space: nowrap;
}
.n1 {
  left: 884px;
  top: 83px;
}
.t1 {
  left: 901px;
  top: 77px;
  width: 207px;
}
.n2 {
  left: 332px;
  top: 402px;
}
.t2 {
  left: 348px;
  top: 396px;
  width: 136px;
}
.n3 {
  left: 584px;
  top: 296px;
}
.t3 {
  left: 600px;
  top: 289px;
  width: 371px;
}
.n4 {
  left: 566px;
  top: 476px;
}
.t4 {
  left: 584px;
  top: 469px;
  width: 369px;
}
```
